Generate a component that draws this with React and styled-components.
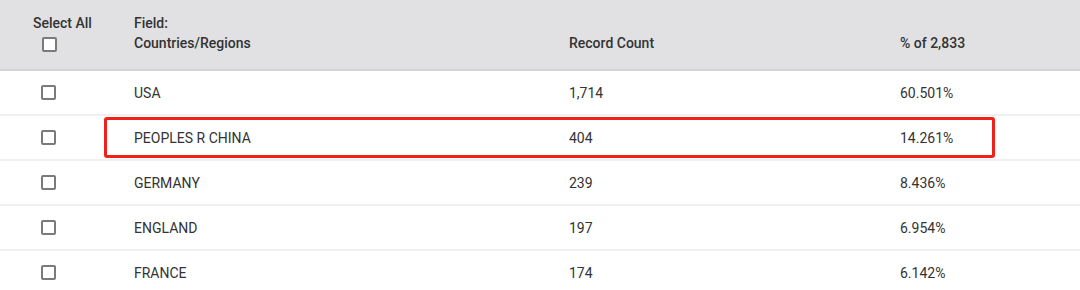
import React from "react";
import styled, { createGlobalStyle } from "styled-components";

const Global = createGlobalStyle`
  html, body { margin: 0; padding: 0; background: #ffffff; }
  body { font-family: Roboto, "Noto Sans", sans-serif; color: #333333; }
`;

const Table = styled.div`
  width: 1080px;
  display: flex;
  flex-direction: column;
`;

const cols = "134px 435px 331px 1fr";

const HeaderRow = styled.div`
  display: grid;
  grid-template-columns: ${cols};
  height: 69px;
  background: #e1e1e3;
  border-bottom: 2px solid #d4d4d7;
  box-sizing: content-box;
  font-size: 14px;
  font-weight: 500;
  line-height: 20px;
  color: #333333;
`;

const HeadCell = styled.div`
  display: flex;
  flex-direction: column;
  justify-content: ${(p) => (p.$bottom ? "flex-end" : "flex-start")};
  padding: 13px 0 16px ${(p) => p.$pl || 0}px;
`;

const Row = styled.div`
  position: relative;
  display: grid;
  grid-template-columns: ${cols};
  align-items: center;
  height: 43px;
  border-bottom: 2px solid #f0f0f1;
  font-size: 14px;
  line-height: 20px;
  color: #333333;
`;

const Cell = styled.div`
  padding-left: ${(p) => p.$pl || 0}px;
  display: flex;
  align-items: center;
`;

const Box = styled.span`
  display: block;
  width: 15px;
  height: 15px;
  box-sizing: border-box;
  border: 2px solid #7a7a7a;
  border-radius: 2px;
  background: #fff;
  margin-left: ${(p) => p.$ml || 0}px;
  margin-top: ${(p) => p.$mt || 0}px;
`;

const Highlight = styled.div`
  position: absolute;
  left: 104px;
  top: 1px;
  width: 891px;
  height: 41px;
  box-sizing: border-box;
  border: 3px solid #ef2219;
  border-radius: 3px;
  pointer-events: none;
`;

const data = [
  ["USA", "1,714", "60.501%"],
  ["PEOPLES R CHINA", "404", "14.261%", true],
  ["GERMANY", "239", "8.436%"],
  ["ENGLAND", "197", "6.954%"],
  ["FRANCE", "174", "6.142%"],
];

export default function App() {
  return (
    <>
      <Global />
      <Table>
        <HeaderRow>
          <HeadCell $pl={33}>
            <span>Select All</span>
            <Box $ml={9} $mt={4} />
          </HeadCell>
          <HeadCell>
            <span>Field:</span>
            <span>Countries/Regions</span>
          </HeadCell>
          <HeadCell $bottom>
            <span>Record Count</span>
          </HeadCell>
          <HeadCell $bottom>
            <span>% of 2,833</span>
          </HeadCell>
        </HeaderRow>
        {data.map(([name, count, pct, hl]) => (
          <Row key={name}>
            <Cell $pl={41}>
              <Box />
            </Cell>
            <Cell>{name}</Cell>
            <Cell>{count}</Cell>
            <Cell>{pct}</Cell>
            {hl && <Highlight />}
          </Row>
        ))}
      </Table>
    </>
  );
}
